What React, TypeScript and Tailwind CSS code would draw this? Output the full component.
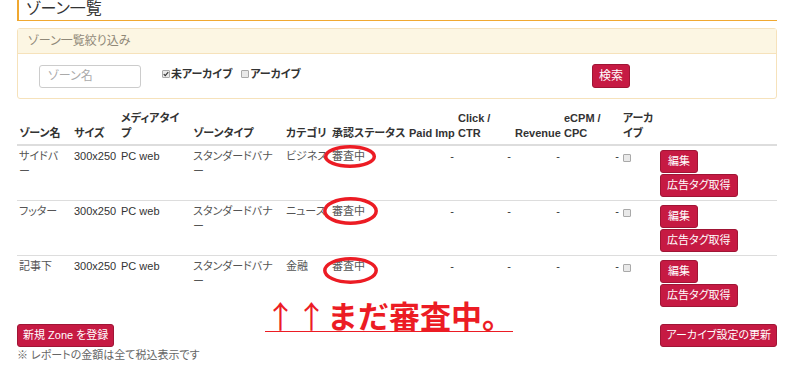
import React from 'react';

interface ZoneRow {
  name: string;
  size: string;
  media: string;
  type: string;
  category: string;
  status: string;
}

const rows: ZoneRow[] = [
{ name: 'サイドバー', size: '300x250', media: 'PC web', type: 'スタンダードバナー', category: 'ビジネス', status: '審査中' },
{ name: 'フッター', size: '300x250', media: 'PC web', type: 'スタンダードバナー', category: 'ニュース', status: '審査中' },
{ name: '記事下', size: '300x250', media: 'PC web', type: 'スタンダードバナー', category: '金融', status: '審査中' }];


function RedButton({ children, className = '' }: {children: React.ReactNode;className?: string;}) {
  return (
    <button
      className={`h-[23px] rounded-[3px] border border-[#a01535] bg-[#c61a43] text-white text-[11px] leading-[21px] whitespace-nowrap ${className}`}>
      {children}
    </button>);

}

function Box({ checked }: {checked?: boolean;}) {
  return (
    <span className="inline-flex w-[8px] h-[8px] items-center justify-center border border-[#a9a9a9] rounded-[1px] bg-[#e9e9e9]">
      {checked &&
      <svg viewBox="0 0 8 8" className="w-[6px] h-[6px]">
          <path d="M1 4.2 L3 6.2 L7 1.5" stroke="#333" strokeWidth="1.5" fill="none" />
        </svg>
      }
    </span>);

}

export default function App() {
  return (
    <div className="relative w-[800px] h-[378px] overflow-hidden bg-white text-[11px] leading-[15px] text-[#333] font-['Liberation_Sans','Noto_Sans_CJK_JP',sans-serif] [font-feature-settings:'palt']">
      <div className="ml-[17px] w-[760px]">
        <h2 className="h-[21px] border-l-2 border-b border-[#f0a830] pl-[7px] text-[16px] leading-[17px] font-normal text-[#333]">
          ゾーン一覧
        </h2>

        {/* filter panel */}
        <div className="mt-[7px] rounded-[3px] border border-[#f6e2bb]">
          <div className="h-[25px] px-[10px] bg-[#fcf6e3] border-b border-[#f6e2bb] text-[12px] leading-[24px] text-[#8f8878]">
            ゾーン一覧絞り込み
          </div>
          <div className="h-[44px] flex items-center">
            <div className="w-[144px] pl-[21px]">
              <div className="w-[102px] h-[23px] border border-[#ccc] rounded-[3px] px-[8px] text-[12px] leading-[21px] text-[#aaa]">
                ゾーン名
              </div>
            </div>
            <div className="w-[430px] flex items-center gap-[9px] -mt-[4px] font-bold text-[11px]">
              <label className="flex items-center gap-[1px]">
                <Box checked />
                未アーカイブ
              </label>
              <label className="flex items-center gap-[1px]">
                <Box />
                アーカイブ
              </label>
            </div>
            <RedButton className="h-[24px] px-[6px] text-[12px]">検索</RedButton>
          </div>
        </div>

        {/* zone table */}
        <table className="mt-[12px] w-[760px] table-fixed border-collapse">
          <colgroup>
            <col className="w-[55px]" />
            <col className="w-[47px]" />
            <col className="w-[72px]" />
            <col className="w-[93px]" />
            <col className="w-[46px]" />
            <col className="w-[77px]" />
            <col className="w-[49px]" />
            <col className="w-[57px]" />
            <col className="w-[49px]" />
            <col className="w-[59px]" />
            <col className="w-[37px]" />
            <col />
          </colgroup>
          <thead>
            <tr className="font-bold text-left align-bottom">
              <th className="px-[2px] pb-[3px] pt-[3px] border-b-2 border-[#ddd]">ゾーン名</th>
              <th className="px-[2px] pb-[3px] border-b-2 border-[#ddd]">サイズ</th>
              <th className="px-[2px] pb-[3px] border-b-2 border-[#ddd]">メディアタイプ</th>
              <th className="px-[2px] pb-[3px] border-b-2 border-[#ddd]">ゾーンタイプ</th>
              <th className="px-[2px] pb-[3px] border-b-2 border-[#ddd] whitespace-nowrap">カテゴリ</th>
              <th className="px-[2px] pb-[3px] border-b-2 border-[#ddd] whitespace-nowrap">承認ステータス</th>
              <th className="px-[2px] pb-[3px] border-b-2 border-[#ddd] whitespace-nowrap">Paid Imp</th>
              <th className="px-[2px] pb-[3px] border-b-2 border-[#ddd]">Click / CTR</th>
              <th className="px-[2px] pb-[3px] border-b-2 border-[#ddd] whitespace-nowrap">Revenue</th>
              <th className="px-[2px] pb-[3px] border-b-2 border-[#ddd]">eCPM / CPC</th>
              <th className="px-[2px] pb-[3px] border-b-2 border-[#ddd]">アーカイブ</th>
              <th className="px-[2px] pb-[3px] border-b-2 border-[#ddd]"></th>
            </tr>
          </thead>
          <tbody>
            {rows.map((r, i) =>
            <tr key={i} className="align-top text-[#555] border-t border-[#ddd]">
                <td className="h-[55px] pl-[2px] pr-[9px] pt-[3px]">{r.name}</td>
                <td className="px-[2px] pt-[3px] text-[#333]">{r.size}</td>
                <td className="px-[2px] pt-[3px] text-[#333]">{r.media}</td>
                <td className="pl-[2px] pr-[9px] pt-[3px]">{r.type}</td>
                <td className="px-[2px] pt-[3px] whitespace-nowrap">{r.category}</td>
                <td className="px-[2px] pt-[3px]">{r.status}</td>
                <td className="px-[2px] pt-[3px] text-right text-[#333]">-</td>
                <td className="px-[2px] pt-[3px] text-right text-[#333]">-</td>
                <td className="px-[2px] pt-[3px] text-right text-[#333]">-</td>
                <td className="px-[2px] pt-[3px] text-right text-[#333]">-</td>
                <td className="px-[2px] pt-[5px]">
                  <Box />
                </td>
                <td className="px-[2px] pt-[4px]">
                  <div className="flex flex-col items-start gap-[1px]">
                    <RedButton className="px-[7px]">編集</RedButton>
                    <RedButton className="px-[6px]">広告タグ取得</RedButton>
                  </div>
                </td>
              </tr>
            )}
          </tbody>
        </table>

        <div className="mt-[14px] flex items-start justify-between">
          <div>
            <RedButton className="px-[5px]">新規 Zone を登録</RedButton>
            <p className="mt-[2px] text-[11px] leading-[13px] text-[#666]">※ レポートの金額は全て税込表示です</p>
          </div>
          <RedButton className="px-[5px]">アーカイブ設定の更新</RedButton>
        </div>
      </div>

      {/* red annotations over the table */}
      <svg className="absolute left-0 top-0 pointer-events-none" width="800" height="378" viewBox="0 0 800 378">
        <g fill="none" stroke="#ec1c24" strokeWidth="3.5">
          <ellipse cx="350" cy="156.5" rx="24.3" ry="9.8" />
          <ellipse cx="350.5" cy="211" rx="25.7" ry="12.2" />
          <ellipse cx="350.5" cy="270.5" rx="25.7" ry="11.7" />
        </g>
      </svg>
      <div className="absolute left-[265px] top-[299px] border-b border-[#ec1c24] text-[31px] leading-[32px] text-[#ec1c24] whitespace-nowrap [font-feature-settings:normal] font-['Noto_Sans_CJK_JP',sans-serif]">
        <span className="font-normal">↑↑</span>
        <span className="font-bold">まだ審査中。</span>
      </div>
    </div>);

}
